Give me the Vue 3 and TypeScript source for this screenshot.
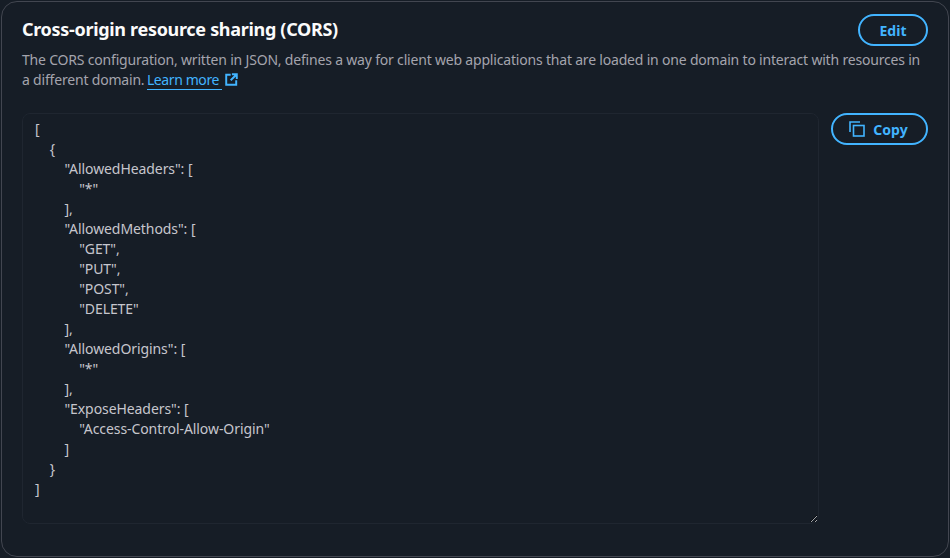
<script setup lang="ts">
const cors: string = `[
    {
        "AllowedHeaders": [
            "*"
        ],
        "AllowedMethods": [
            "GET",
            "PUT",
            "POST",
            "DELETE"
        ],
        "AllowedOrigins": [
            "*"
        ],
        "ExposeHeaders": [
            "Access-Control-Allow-Origin"
        ]
    }
]`;
</script>

<template>
  <section class="panel">
    <header class="head">
      <div class="titles">
        <h2 class="title">Cross-origin resource sharing (CORS)</h2>
        <p class="desc">
          The CORS configuration, written in JSON, defines a way for client web applications that are loaded in one domain to interact with resources in a different domain.
          <a class="link" href="#" @click.prevent><span class="link-text">Learn more&nbsp;</span><svg class="ext" viewBox="0 0 16 16" width="13" height="13" fill="none" stroke="currentColor" stroke-width="2.4"><path d="M7 2.2H1.5v12.3h12.3V9" /><path d="M8.5 1.5h6V7.5M14.5 1.5 7 9" /></svg></a>
        </p>
      </div>
      <button class="btn edit" type="button">Edit</button>
    </header>
    <div class="body">
      <textarea class="code" readonly :value="cors" spellcheck="false"></textarea>
      <button class="btn copy" type="button">
        <svg viewBox="0 0 16 16" width="16" height="16" fill="none" stroke="currentColor" stroke-width="1.6"><path d="M1 11V1h10" /><rect x="4.5" y="4.5" width="10.5" height="10.5" /></svg>
        Copy
      </button>
    </div>
  </section>
</template>

<style>
html, body { margin: 0; background: #161d26; }
</style>

<style scoped>
.panel {
  box-sizing: border-box;
  width: 948px;
  height: 556px;
  margin: 1px;
  padding: 14px 20px 0;
  border: 1px solid #424650;
  border-radius: 16px;
  background: #161d26;
  font-family: "Noto Sans", "Open Sans", sans-serif;
  color: #c6c6cd;
  overflow: hidden;
  position: relative;
}
.head {
  display: flex;
  justify-content: space-between;
  gap: 16px;
}
.titles { flex: 1; min-width: 0; }
.title {
  margin: 0;
  font-size: 18px;
  line-height: 26px;
  font-weight: 700;
  letter-spacing: -0.31px;
  color: #fbfbfb;
}
.desc {
  margin: 8px 0 0;
  width: 905px;
  font-size: 14px;
  line-height: 20px;
  letter-spacing: -0.19px;
  color: #a4a4ad;
}
.link {
  color: #42b4ff;
  text-decoration: none;
  letter-spacing: -0.4px;
  margin-left: -1px;
}
.link-text {
  border-bottom: 1px solid #42b4ff;
  padding-bottom: 0;
}
.ext { vertical-align: -1px; margin-left: 3px; }
.btn {
  box-sizing: border-box;
  height: 32px;
  border: 2px solid #42b4ff;
  border-radius: 20px;
  background: transparent;
  color: #42b4ff;
  font-family: inherit;
  font-size: 14px;
  font-weight: 700;
  display: inline-flex;
  align-items: center;
  justify-content: center;
  gap: 8px;
  flex: none;
}
.edit { width: 70px; position: absolute; right: 20px; top: 12px; }
.body {
  display: flex;
  align-items: flex-start;
  justify-content: space-between;
  margin-top: 23px;
}
.code {
  box-sizing: border-box;
  display: block;
  width: 797px;
  height: 411px;
  padding: 5px 12px;
  border: 1px solid #1f2630;
  border-radius: 8px;
  background: #161d26;
  color: #c6c6cd;
  font-family: inherit;
  font-size: 14px;
  line-height: 20px;
  letter-spacing: -0.08px;
  word-spacing: 0.12px;
  outline: none;
  white-space: pre;
  resize: both;
  overflow: hidden;
}
.copy { width: 97px; padding: 0 2px 0 0; }
</style>
